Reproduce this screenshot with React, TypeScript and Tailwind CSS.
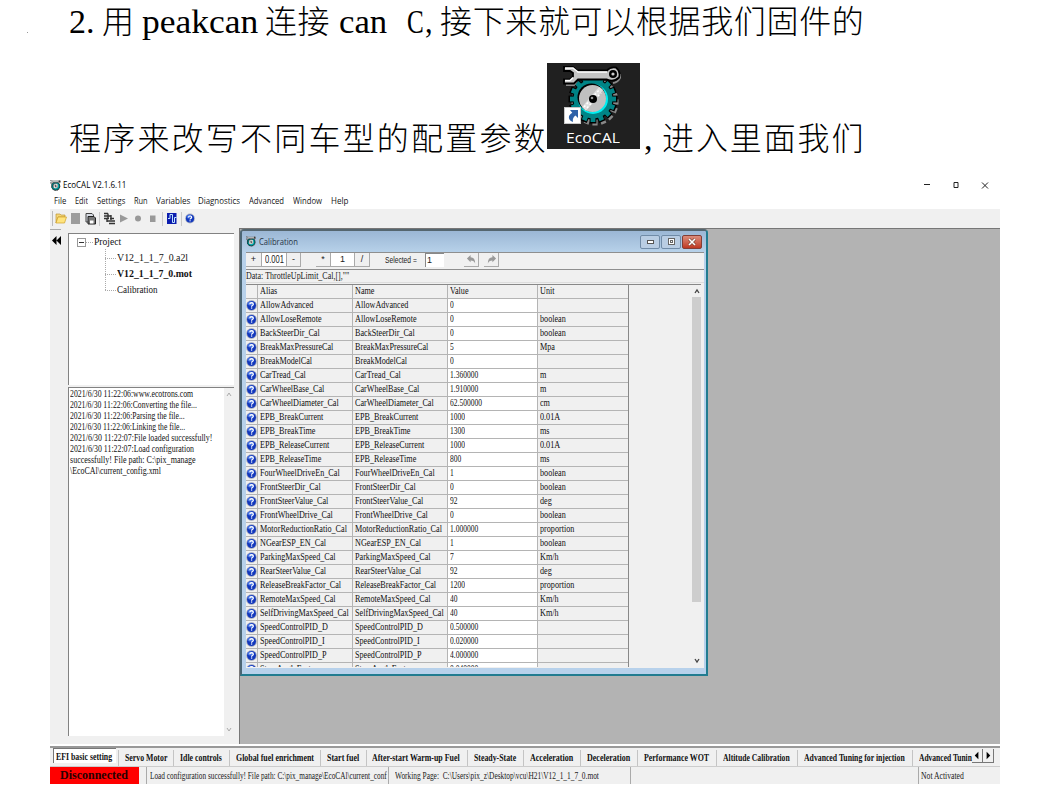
import { useLayoutEffect, useRef, useState, type ReactNode } from "react";

/* Text condensed or widened horizontally to an exact width. */
function Fit({ w, className = "", children }: { w: number; className?: string; children: ReactNode }) {
  const ref = useRef<HTMLSpanElement>(null);
  const [k, setK] = useState(1);
  useLayoutEffect(() => {
    if (ref.current && ref.current.offsetWidth) setK(w / ref.current.offsetWidth);
  }, [w]);
  return (
    <span className={`block shrink-0 whitespace-pre ${className}`} style={{ width: w }}>
      <span className="block origin-left" style={{ transform: `scaleX(${k})`, width: "max-content" }}>
        <span ref={ref} className="inline-block">{children}</span>
      </span>
    </span>
  );
}

function AppIcon({ className }: { className: string }) {
  const teeth = Array.from({ length: 16 }, (_, i) => i * 22.5);
  return (
    <svg viewBox="0 0 58 60" className={className}>
      <g transform="translate(32 36)">
        {teeth.map((a) => (
          <rect key={a} x="-2.6" y="-23.5" width="5.2" height="6" fill="#888" transform={`rotate(${a})`} />
        ))}
      </g>
      <g transform="translate(30 33)">
        {teeth.map((a) => (
          <rect key={a} x="-3.4" y="-24.5" width="6.8" height="7" fill="#000" transform={`rotate(${a})`} />
        ))}
        <circle r="20.5" fill="#000" />
        {teeth.map((a) => (
          <rect key={a} x="-2.400" y="-23" width="4.800" height="7" fill="#008486" transform={`rotate(${a})`} />
        ))}
        <circle r="19.500" fill="#008486" />
        <circle r="15" fill="#00eef0" />
        <circle cx="-1.5" cy="-1.5" r="14" fill="#000" />
        <circle cx="-.5" cy="-.5" r="13.5" fill="#c0c0c0" />
        <path d="M-11 8 L6 -12 L10 -9 L-7 12Z" fill="#e0e0e0" />
        <path d="M-9 8 L7 -10 M-6 9 L8 -6" stroke="#fff" strokeWidth="1.5" strokeDasharray="2 2" />
        <circle r="4" fill="#000" />
        <circle cx="-1" cy="-1" r="1.300" fill="#999" />
      </g>
      <path d="M3 19h8l3-4M50 17q7-1 8-9" fill="none" stroke="#8a8a8a" strokeWidth="2" />
      <path d="M1 1h9l4 3.500h30q3-4 9-3 5 4 3 10-5 5-12 2H15l-4 4H1v-4h6l3-3V7L7 5H1Z" fill="#c4c4c4" stroke="#000" strokeWidth="1.8" />
      <path d="M2 2h8l5 4h29M2 14.500h5l3-3" fill="none" stroke="#fff" strokeWidth="1.5" />
      <circle cx="50" cy="8" r="4" fill="#000" />
      <circle cx="50" cy="8" r="1.6" fill="#ccc" />
    </svg>
  );
}

function Help({ className }: { className: string }) {
  return (
    <svg viewBox="0 0 12 12" className={className}>
      <circle cx="6" cy="6" r="5.9" fill="#aeb4c4" />
      <circle cx="6" cy="6" r="4.9" fill="#1237bd" />
      <ellipse cx="5" cy="3.8" rx="3.2" ry="2.2" fill="#4673e4" />
      <path d="M4.1 4.7Q4.2 3 6.1 3T8 4.6Q7.9 5.5 6.9 6 6.1 6.4 6.1 7.3" fill="none" stroke="#fff" strokeWidth="1.4" />
      <rect x="5.4" y="8.1" width="1.4" height="1.3" fill="#fff" />
    </svg>
  );
}

const menus: [string, number, number][] = [
  ["File", 12, 9], ["Edit", 13, 9], ["Settings", 28, 9], ["Run", 14, 8], ["Variables", 34, 8],
  ["Diagnostics", 42, 9], ["Advanced", 35, 9], ["Window", 29, 9], ["Help", 17, 0],
];

const rows: [string, string, string][] = [
  ["AllowAdvanced", "0", ""],
  ["AllowLoseRemote", "0", "boolean"],
  ["BackSteerDir_Cal", "0", "boolean"],
  ["BreakMaxPressureCal", "5", "Mpa"],
  ["BreakModelCal", "0", ""],
  ["CarTread_Cal", "1.360000", "m"],
  ["CarWheelBase_Cal", "1.910000", "m"],
  ["CarWheelDiameter_Cal", "62.500000", "cm"],
  ["EPB_BreakCurrent", "1000", "0.01A"],
  ["EPB_BreakTime", "1300", "ms"],
  ["EPB_ReleaseCurrent", "1000", "0.01A"],
  ["EPB_ReleaseTime", "800", "ms"],
  ["FourWheelDriveEn_Cal", "1", "boolean"],
  ["FrontSteerDir_Cal", "0", "boolean"],
  ["FrontSteerValue_Cal", "92", "deg"],
  ["FrontWheelDrive_Cal", "0", "boolean"],
  ["MotorReductionRatio_Cal", "1.000000", "proportion"],
  ["NGearESP_EN_Cal", "1", "boolean"],
  ["ParkingMaxSpeed_Cal", "7", "Km/h"],
  ["RearSteerValue_Cal", "92", "deg"],
  ["ReleaseBreakFactor_Cal", "1200", "proportion"],
  ["RemoteMaxSpeed_Cal", "40", "Km/h"],
  ["SelfDrivingMaxSpeed_Cal", "40", "Km/h"],
  ["SpeedControlPID_D", "0.500000", ""],
  ["SpeedControlPID_I", "0.020000", ""],
  ["SpeedControlPID_P", "4.000000", ""],
  ["SteerAngleFactor", "0.040000", ""],
];

function Cell({ text, className, scale = "scale-x-[0.815]" }: { text: string; className: string; scale?: string }) {
  return (
    <div className={`h-[14px] shrink-0 border-b border-r border-[#b4b4b4] pl-[1.5px] ${className}`}>
      <span className={`block w-max origin-left whitespace-nowrap ${scale}`}>{text}</span>
    </div>
  );
}

function Row({ name, value, unit, head = false }: { name: [string, string]; value: string; unit: string; head?: boolean }) {
  return (
    <div className="flex h-[14px] shrink-0 text-[10px] leading-[12px] text-[#111]">
      <div className="flex h-[14px] w-[12px] shrink-0 items-center border-b border-r border-[#b4b4b4]">
        {!head && <Help className="h-[11px] w-[11px] shrink-0" />}
      </div>
      <Cell text={name[0]} className="w-[95px]" />
      <Cell text={name[1]} className="w-[95px]" />
      <Cell text={value} className={head ? "w-[90px]" : "w-[90px] bg-white"} scale={head ? "scale-x-[0.815]" : "scale-x-[0.75]"} />
      <Cell text={unit} className="w-[91px]" />
    </div>
  );
}

const log: [string, number][] = [
  ["2021/6/30 11:22:06:www.ecotrons.com", 123],
  ["2021/6/30 11:22:06:Converting the file...", 127],
  ["2021/6/30 11:22:06:Parsing the file...", 115],
  ["2021/6/30 11:22:06:Linking the file...", 115],
  ["2021/6/30 11:22:07:File loaded successfully!", 142],
  ["2021/6/30 11:22:07:Load configuration", 124],
  ["successfully! File path: C:\\pix_manage", 126],
  ["\\EcoCAl\\current_config.xml", 91],
];

/* label, tab width, label inset, label width */
const tabs: [string, number, number, number][] = [
  ["Servo Motor", 55, 7, 42],
  ["Idle controls", 56, 7, 42],
  ["Global fuel enrichment", 91, 7, 78],
  ["Start fuel", 46, 7, 32],
  ["After-start Warm-up Fuel", 101, 6, 88],
  ["Steady-State", 56, 7, 42],
  ["Acceleration", 57, 7, 43],
  ["Deceleration", 57, 7, 43],
  ["Performance WOT", 79, 7, 65],
  ["Altitude Calibration", 81, 7, 67],
  ["Advanced Tuning for injection", 115, 7, 101],
  ["Advanced Tunin", 60, 7, 53],
];

function Desktop() {
  return (
    <div className="relative h-[86px] w-[93px] shrink-0 overflow-hidden bg-[#202020] font-normal">
      <AppIcon className="absolute left-[16px] top-[3px] h-[60px] w-[58px]" />
      <div className="absolute left-[17px] top-[44px] h-[17px] w-[17px] border border-[#c8c8c8] bg-white">
        <svg viewBox="0 0 15 15" className="block h-full w-full">
          <path d="M5 2h8v8l-2.5-2.5Q7 10 8 14 3 12 4 8 5 6 7.300 4.800Z" fill="#2f62a8" />
        </svg>
      </div>
      <div className="absolute left-[19px] top-[65px] font-['Open_Sans',sans-serif] text-[14px] leading-[20px] text-white">
        <Fit w={54}>EcoCAL</Fit>
      </div>
    </div>
  );
}

function Tools() {
  return (
    <div className="flex h-[19px] items-center bg-[#f0f0f0] pl-[2px]">
      <div className="h-[15px] w-px bg-[#bbb]" />
      <svg viewBox="0 0 150 18" className="h-[18px] w-[150px]">
        <path d="M3 4h4l1 1h4v2H5l-2 6Z" fill="#f4d679" stroke="#b58a24" strokeWidth=".6" />
        <path d="M5 7h8.500l-2 6H3Z" fill="#ffe47e" stroke="#d0a02a" strokeWidth=".7" />
        <rect x="18" y="3" width="9" height="11" fill="#9c9c9c" />
        <path d="M33 3.500h6l1.500 1.500v7H33Z" fill="#d8dce4" stroke="#444" />
        <path d="M35 6.500h6l1.500 1.500v6H35Z" fill="#777" stroke="#222" />
        <rect x="37" y="10.500" width="3.500" height="3" fill="#fff" />
        <path d="M46.500 2v14M109.500 2v14M128.500 2v14" stroke="#c8c8c8" />
        <path d="M51 3.500h4M51 6h7M51 8.500h5M55 3.500v5M58 5v5M54 11h8M57 8.500h4M56 13.500h6M54 9v3" stroke="#333" strokeWidth="1.400" fill="none" />
        <path d="M67 4.500l8 4-8 4Z" fill="#999" />
        <circle cx="85" cy="8.500" r="3" fill="#999" />
        <rect x="97" y="5.500" width="5.500" height="6.500" fill="#999" />
        <rect x="114" y="3" width="9.500" height="11" fill="#0b1cae" />
        <path d="M115 8.500h2v-4h2.500v8h2v-5h2" fill="none" stroke="#bfe4ff" />
      </svg>
      <Help className="-ml-[18px] h-[11px] w-[10px]" />
    </div>
  );
}

function Calibration() {
  const button = "flex h-[14px] shrink-0 items-center justify-center border-b border-r border-[#aaa] text-[9px]";
  return (
    <div className="flex h-[447px] w-[468px] flex-col overflow-hidden rounded-t-[4px] border-2 border-b-[#217c90] border-l-[#4c6674] border-r-[#217c90] border-t-[#55666f] bg-[#b7d1eb] pl-[4px]">
      <div className="-ml-[4px] flex h-[21px] shrink-0 items-center bg-linear-to-b from-[#9bb7d5] to-[#b7d1e9] pl-[4px]">
        <AppIcon className="h-[11px] w-[10px]" />
        <Fit w={39} className="ml-[3px] font-['Open_Sans',sans-serif] text-[9px] leading-[16px] text-[#263443]">Calibration</Fit>
        <div className="ml-[342px] flex gap-[1px]">
          <div className="flex h-[14px] w-[20px] items-center justify-center rounded-[2px] border border-[#708ba7] bg-[#b9cde3]"><div className="h-[4px] w-[7px] border border-[#555] bg-white" /></div>
          <div className="flex h-[14px] w-[20px] items-center justify-center rounded-[2px] border border-[#708ba7] bg-[#b9cde3]"><div className="flex h-[7px] w-[7px] items-center justify-center border border-[#666] bg-white"><div className="h-[3px] w-[3px] border border-[#666]" /></div></div>
          <div className="flex h-[14px] w-[20px] items-center justify-center rounded-[2px] border border-[#833e35] bg-linear-to-b from-[#db8c7b] to-[#be3720]">
            <svg viewBox="0 0 8 8" className="h-[8px] w-[8px]"><path d="M1 1l6 6M7 1L1 7" stroke="#743" strokeWidth="2.800" /><path d="M1 1l6 6M7 1L1 7" stroke="#fff" strokeWidth="1.600" /></svg>
          </div>
        </div>
      </div>
      <div className="flex h-[416px] w-[458px] shrink-0 flex-col overflow-hidden bg-[#f0f0f0]">
        <div className="flex h-[18px] shrink-0 border-b border-t border-[#8e8e8e] font-['Liberation_Sans',sans-serif] text-[#222]">
          <div className={`${button} w-[16px]`}>+</div>
          <div className={`${button} w-[25px] bg-white`}><Fit w={19} className="text-[10px]">0.001</Fit></div>
          <div className={`${button} w-[14px]`}>-</div>
          <div className="w-[15px]" />
          <div className={`${button} w-[15px]`}>*</div>
          <div className={`${button} w-[24px] bg-white`}>1</div>
          <div className={`${button} w-[15px]`}>/</div>
          <Fit w={32} className="ml-[15px] text-[9px] leading-[14px]">Selected =</Fit>
          <div className="ml-[8px] h-[14px] w-[19px] border-l border-t border-[#888] bg-white pl-[1px] text-[9px] leading-[12px]">1</div>
          <div className={`${button} ml-[20px] w-[15px]`}>
            <svg viewBox="0 0 12 12" className="h-[11px] w-[11px]"><path d="M1 5l4-4v2.500q5 0 5 7-1-3.500-5-3.500v2Z" fill="#999" /></svg>
          </div>
          <div className={`${button} ml-[5px] w-[15px]`}>
            <svg viewBox="0 0 12 12" className="h-[11px] w-[11px]"><path d="M11 5L7 1v2.500q-5 0-5 7 1-3.500 5-3.500v2Z" fill="#999" /></svg>
          </div>
        </div>
        <div className="h-[13px] shrink-0 border-b border-[#ddd] text-[10px] leading-[12px] text-[#222]"><Fit w={103}>{'Data: ThrottleUpLimit_Cal,[],""'}</Fit></div>
        <div className="mt-px flex h-[383px] w-[455px] shrink-0 overflow-hidden border-t border-[#888]">
          <div className="flex h-full w-[383px] shrink-0 flex-col overflow-hidden border-r border-[#888]">
            <Row head name={["Alias", "Name"]} value="Value" unit="Unit" />
            {rows.map((r) => <Row key={r[0]} name={[r[0], r[0]]} value={r[1]} unit={r[2]} />)}
          </div>
          <div className="ml-[63px] flex w-[9px] flex-col items-center">
            <svg viewBox="0 0 8 12" className="h-[12px] w-[8px]"><path d="M2 8l2-3 2 3" fill="none" stroke="#444" strokeWidth="1.300" /></svg>
            <div className="h-[305px] w-full bg-[#cdcdcd]" />
            <svg viewBox="0 0 8 12" className="mt-auto h-[12px] w-[8px]"><path d="M2 4l2 3 2-3" fill="none" stroke="#444" strokeWidth="1.300" /></svg>
          </div>
        </div>
      </div>
    </div>
  );
}

function Tree() {
  return (
    <div className="relative h-[152px] w-[166px] border-l border-t border-[#828282] bg-white text-[11px] text-[#111]">
      <svg viewBox="0 0 60 70" className="absolute left-[8px] top-0 h-[70px] w-[60px]">
        <rect x=".5" y="4.500" width="8" height="8" fill="#fff" stroke="#999" />
        <path d="M2 8.500h5" stroke="#333" />
        <path d="M9 8.500h7M28.500 15v42M28 24.500h11M28 40.500h11M28 56.500h11" stroke="#aaa" strokeDasharray="1 1" />
      </svg>
      <div className="pl-[25px] leading-[15px]"><Fit w={27}>Project</Fit></div>
      <div className="pl-[48px] leading-[16px]"><Fit w={71}>V12_1_1_7_0.a2l</Fit></div>
      <div className="pl-[48px] font-bold leading-[16px]"><Fit w={75}>V12_1_1_7_0.mot</Fit></div>
      <div className="pl-[48px] leading-[16px]"><Fit w={41}>Calibration</Fit></div>
    </div>
  );
}

export default function App() {
  const cjk = "block shrink-0 whitespace-nowrap font-['Noto_Sans_CJK_SC',sans-serif] text-[32px] leading-[47px]";
  return (
    <div className="flex h-[798px] w-[1039px] flex-col bg-white font-['Liberation_Serif','Noto_Sans_CJK_SC',serif] text-black">
      <div className="flex h-[63px] shrink-0 items-start font-light">
        <div className="ml-[27px] mt-[32px] h-px w-px bg-[#999]" />
        <div className="ml-[41px] flex text-[34px] leading-[43px]">
          <Fit w={26}>2.</Fit>
          <span className={`${cjk} -mt-[4px] ml-[7px] w-[39px]`}>用</span>
          <Fit w={116} className="ml-px">peakcan</Fit>
          <span className={`${cjk} -mt-[4px] ml-[7px] w-[74px] tracking-[0.6px]`}>连接</span>
          <Fit w={48}>can</Fit>
          <Fit w={17} className="ml-[20px]">C</Fit>
          <Fit w={8} className="ml-px">,</Fit>
          <span className={`${cjk} -mt-[4px] ml-[7px] tracking-[0.65px]`}>接下来就可以根据我们固件的</span>
        </div>
      </div>
      <div className="flex h-[111px] shrink-0 pl-[69px] text-[34px] font-light">
        <span className={`${cjk} mt-[50px] w-[478px] tracking-[2.2px]`}>程序来改写不同车型的配置参数</span>
        <Desktop />
        <span className="ml-[4px] mt-[54px] w-[18px] leading-[43px]">,</span>
        <span className={`${cjk} mt-[50px] tracking-[1.9px]`}>进入里面我们</span>
      </div>

      <div className="ml-[50px] flex h-[610px] w-[950px] shrink-0 flex-col">
        <div className="flex h-[20px] shrink-0 items-center pt-[2px] font-['Open_Sans',sans-serif] text-[9px]">
          <AppIcon className="h-[11px] w-[11px]" />
          <Fit w={63} className="ml-[2px]">EcoCAL V2.1.6.11</Fit>
          <svg viewBox="0 0 70 12" className="ml-[798px] h-[12px] w-[70px]">
            <path d="M0 5.500h6M30 3.500h4v5h-4ZM58 3.500l6 6M64 3.500l-6 6" fill="none" stroke="#222" />
          </svg>
        </div>
        <div className="flex h-[15px] shrink-0 items-center pb-px pl-[4px] font-['Open_Sans',sans-serif] text-[9px] text-[#151515]">
          {menus.map(([m, w, gap]) => (
            <div key={m} className="flex">
              <Fit w={w}>{m}</Fit>
              <div style={{ width: gap }} />
            </div>
          ))}
        </div>
        <Tools />
        <div className="flex h-[516px] shrink-0 bg-[#f0f0f0]">
          <div className="w-[18px] shrink-0 pt-px">
            <div className="h-px w-[11px] bg-[#aaa]" />
            <svg viewBox="0 0 10 10" className="ml-[2px] mt-[6px] h-[9px] w-[9px]"><path d="M5 0v10L0 5ZM10 0v10L5 5Z" fill="#000" /></svg>
          </div>
          <div className="flex w-[166px] shrink-0 flex-col gap-[2px] pt-[5px]">
            <Tree />
            <div className="flex h-[349px] justify-between border-l border-t border-[#828282] bg-white">
              <div className="w-[155px] pl-px pt-px text-[9.5px] leading-[11px] text-[#111]">
                {log.map(([t, w]) => <Fit key={t} w={w}>{t}</Fit>)}
              </div>
              <div className="flex w-[10px] flex-col items-center justify-between bg-[#f0f0f0] py-[2px]">
                <svg viewBox="0 0 8 10" className="h-[10px] w-[8px]"><path d="M2 6l2-3 2 3" fill="none" stroke="#aaa" /></svg>
                <svg viewBox="0 0 8 10" className="h-[10px] w-[8px]"><path d="M2 4l2 3 2-3" fill="none" stroke="#aaa" /></svg>
              </div>
            </div>
          </div>
          <div className="ml-[5px] w-[761px] overflow-hidden border-l border-t border-[#777] bg-[#b3b3b3]"><Calibration /></div>
        </div>
        <div className="mt-[2px] flex h-[20px] shrink-0 items-start overflow-hidden border-t-2 border-[#999] bg-[#f0f0f0] text-[9.5px] font-bold leading-[16px] text-[#111]">
          <div className="ml-[3px] flex h-[15px] w-[63px] shrink-0 border-l border-t border-[#777] bg-white pl-[2px]"><Fit w={56}>EFI basic setting</Fit></div>
          <div className="ml-[2px] flex pt-[2px]">
            {tabs.map(([t, w, inset, tw]) => (
              <div key={t} className="h-[16px] shrink-0 border-l border-[#c4c4c4]" style={{ width: w, paddingLeft: inset - 1 }}>
                <Fit w={tw}>{t}</Fit>
              </div>
            ))}
          </div>
          <div className="flex pt-px">
            {["M7 3v8L3 7Z", "M4 3v8l4-4Z"].map((d) => (
              <svg key={d} viewBox="0 0 11 14" className="h-[14px] w-[11px] border-b border-r border-[#777] bg-[#f0f0f0]"><path d={d} /></svg>
            ))}
          </div>
        </div>
        <div className="flex h-[18px] shrink-0 items-stretch border-t border-[#ccc] bg-[#f0f0f0] text-[10px] leading-[17px] text-[#222]">
          <div className="w-[89px] bg-[#ff0000] pl-[10px] text-[12px] font-bold leading-[16px] text-[#290000]"><Fit w={68}>Disconnected</Fit></div>
          <div className="ml-[7px] w-[242px] border-l border-[#aaa] pl-[3px]"><Fit w={237}>{"Load configuration successfully! File path: C:\\pix_manage\\EcoCAl\\current_conf"}</Fit></div>
          <div className="w-[242px] border-l border-[#aaa] pl-[6px]"><Fit w={204}>{"Working Page:  C:\\Users\\pix_z\\Desktop\\vcu\\H21\\V12_1_1_7_0.mot"}</Fit></div>
          <div className="w-[288px] border-l border-[#aaa]" />
          <div className="flex-1 border-l border-[#aaa] pl-[2px]"><Fit w={43}>Not Activated</Fit></div>
        </div>
      </div>
    </div>
  );
}
